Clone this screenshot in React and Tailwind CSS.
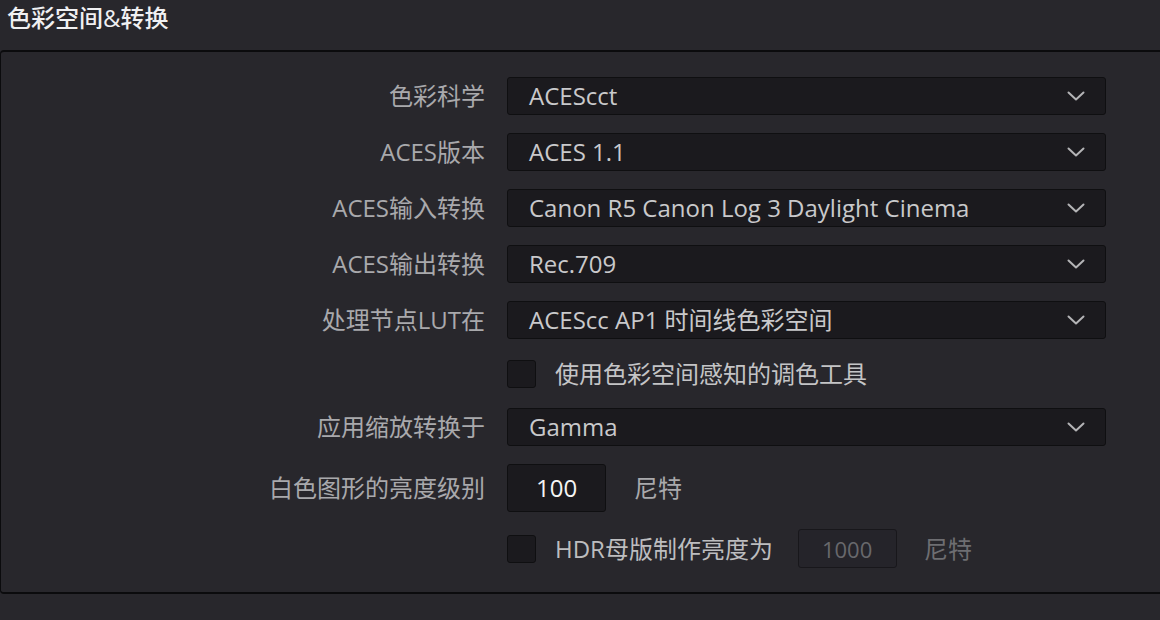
import React from "react";

const font = { fontFamily: '"Open Sans", "Noto Sans CJK SC", sans-serif' };

function Chevron() {
  return (
    <svg width="18" height="10" viewBox="0 0 18 10" fill="none">
      <path d="M1.5 1.5 L9 8.5 L16.5 1.5" stroke="#b4b4b6" strokeWidth="2" strokeLinecap="round" strokeLinejoin="round" />
    </svg>
  );
}

function Label({ children }) {
  return (
    <div className="w-[484px] shrink-0 text-right text-[24px] text-[#a9a9ac] leading-none">{children}</div>
  );
}

function Select({ value }) {
  return (
    <div className="ml-[22px] w-[599px] h-[38px] flex items-center justify-between bg-[#1b1a1e] border border-[#0f0f11] rounded-[3px] pl-[21px] pr-[20px]">
      <span className="text-[24px] text-[#c9c9cb] leading-none">{value}</span>
      <Chevron />
    </div>
  );
}

function Check() {
  return <div className="w-[29px] h-[28px] bg-[#1b1a1e] border border-[#0f0f11] rounded-[3px] shrink-0" />;
}

function SelectRow({ label, value, mt = "mt-[18px]" }) {
  return (
    <div className={`flex items-center ${mt}`}>
      <Label>{label}</Label>
      <Select value={value} />
    </div>
  );
}

export default function App() {
  return (
    <div className="w-[1160px] h-[620px] bg-[#28272c] overflow-hidden" style={font}>
      <div className="h-[50px] pl-[7px] pt-[6px]">
        <span className="text-[24px] font-medium text-[#f0f0f2] leading-none">色彩空间&amp;转换</span>
      </div>
      <div className="border-y-2 border-l border-[#0b0b0d] rounded-l-[4px] w-[1170px] pb-[24px]">
        <SelectRow label="色彩科学" value="ACEScct" mt="mt-[25px]" />
        <SelectRow label="ACES版本" value="ACES 1.1" />
        <SelectRow label="ACES输入转换" value="Canon R5 Canon Log 3 Daylight Cinema" />
        <SelectRow label="ACES输出转换" value="Rec.709" />
        <SelectRow label="处理节点LUT在" value="ACEScc AP1 时间线色彩空间" />
        <div className="flex items-center mt-[21px]">
          <div className="w-[506px] shrink-0" />
          <Check />
          <span className="ml-[19px] text-[24px] text-[#c4c4c6] leading-none">使用色彩空间感知的调色工具</span>
        </div>
        <SelectRow label="应用缩放转换于" value="Gamma" mt="mt-[20px]" />
        <div className="flex items-center mt-[18px]">
          <Label>白色图形的亮度级别</Label>
          <div className="ml-[22px] w-[99px] h-[48px] bg-[#1b1a1e] border border-[#0f0f11] rounded-[3px] flex items-center pl-[28px]">
            <span className="text-[24px] text-[#f4f4f4] leading-none">100</span>
          </div>
          <span className="ml-[28px] text-[24px] text-[#a9a9ac] leading-none">尼特</span>
        </div>
        <div className="flex items-center mt-[17px]">
          <div className="w-[506px] shrink-0" />
          <Check />
          <span className="ml-[19px] text-[24px] text-[#bdbdbf] leading-none">HDR母版制作亮度为</span>
          <div className="ml-[25px] w-[99px] h-[39px] bg-[#25242a] border border-[#18171b] rounded-[3px] flex items-center pl-[23px]">
            <span className="text-[22px] text-[#68686c] leading-none">1000</span>
          </div>
          <span className="ml-[27px] text-[24px] text-[#6e6e72] leading-none">尼特</span>
        </div>
      </div>
    </div>
  );
}
